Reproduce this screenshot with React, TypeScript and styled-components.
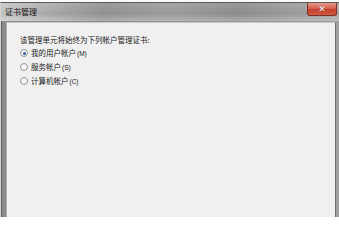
import React from "react";
import styled, { createGlobalStyle } from "styled-components";

const Global = createGlobalStyle`
  html, body { margin: 0; padding: 0; background: #ffffff; }
  body { width: 339px; height: 217px; overflow: hidden; }
`;

const Page = styled.div`
  width: 339px;
  height: 217px;
  display: flex;
  flex-direction: column;
  background: #fafafa;
  padding-top: 2px;
  box-sizing: border-box;
`;

const Window = styled.div`
  flex: 1;
  display: flex;
  flex-direction: column;
  border-left: 1px solid #d4d4d4;
  border-top: 1px solid #5a5a5a;
  box-shadow: inset 1px 0 0 #5e5e5e;
  background: linear-gradient(to right, #8a8a8a 0px, #8a8a8a 5px, #a0a0a0 100%);
  min-height: 0;
`;

const TitleBar = styled.div`
  height: 18px;
  display: flex;
  align-items: flex-start;
  justify-content: space-between;
  padding: 0 2px 0 4px;
  background:
    linear-gradient(to bottom, rgba(255,255,255,0.05) 0%, rgba(0,0,0,0.05) 60%, rgba(255,255,255,0.22) 100%),
    linear-gradient(to right, #cacaca 0%, #b4b4b4 12%, #979797 30%, #a2a2a2 50%, #939393 70%, #a2a2a2 88%, #adadad 100%);
`;

const Title = styled.span`
  margin-top: 3px;
  font-family: "Noto Sans CJK SC", "Noto Sans", sans-serif;
  font-size: 8px;
  line-height: 11px;
  color: #111111;
`;

const CloseButton = styled.div`
  width: 28px;
  height: 12px;
  display: flex;
  align-items: center;
  justify-content: center;
  border: 1px solid #7c3026;
  border-top: none;
  border-radius: 0 0 3px 3px;
  background: linear-gradient(to bottom, #e79a8c 0%, #d5604d 45%, #c2412e 55%, #cf5a42 100%);
  color: #ffffff;
  font-family: "DejaVu Sans", sans-serif;
  font-weight: bold;
  font-size: 9px;
  line-height: 1;
  text-shadow: 0 0 1px #7a2a20;
`;

const Client = styled.div`
  flex: 1;
  margin: 1px 3px 0 5px;
  border-left: 1px solid #b0b0b0;
  border-right: 1px solid #6e6e6e;
  border-top: 1px solid #c8c8c8;
  background: #f0f0f0;
  padding: 12px 0 0 13px;
  font-family: "Noto Sans CJK SC", "Noto Sans", sans-serif;
  font-size: 7.5px;
  color: #222222;
`;

const Prompt = styled.div`
  line-height: 10px;
  margin-bottom: 3px;
`;

const Options = styled.div`
  display: flex;
  flex-direction: column;
  gap: 4px;
`;

const OptionRow = styled.label`
  display: flex;
  align-items: center;
  gap: 3px;
  height: 10px;
  line-height: 10px;
`;

const Radio = styled.span<{ $checked?: boolean }>`
  width: 6px;
  height: 6px;
  border-radius: 50%;
  border: 1px solid #9a9a9a;
  background: radial-gradient(circle, #ffffff 0%, #e4e4e4 100%);
  display: flex;
  align-items: center;
  justify-content: center;
  flex-shrink: 0;
  &::after {
    content: "";
    width: 3px;
    height: 3px;
    border-radius: 50%;
    background: ${(p) => (p.$checked ? "#2c5f9e" : "transparent")};
  }
`;

const Hot = styled.span`
  font-size: 6.5px;
  font-family: "Liberation Sans", sans-serif;
  margin-left: 1px;
`;

const options = [
  { label: "我的用户帐户", key: "(M)", checked: true },
  { label: "服务帐户", key: "(S)", checked: false },
  { label: "计算机帐户", key: "(C)", checked: false },
];

export default function App() {
  return (
    <>
      <Global />
      <Page>
        <Window>
          <TitleBar>
            <Title>证书管理</Title>
            <CloseButton>✕</CloseButton>
          </TitleBar>
          <Client>
            <Prompt>该管理单元将始终为下列帐户管理证书:</Prompt>
            <Options>
              {options.map((o) => (
                <OptionRow key={o.key}>
                  <Radio $checked={o.checked} />
                  <span>
                    {o.label}
                    <Hot>{o.key}</Hot>
                  </span>
                </OptionRow>
              ))}
            </Options>
          </Client>
        </Window>
      </Page>
    </>
  );
}
